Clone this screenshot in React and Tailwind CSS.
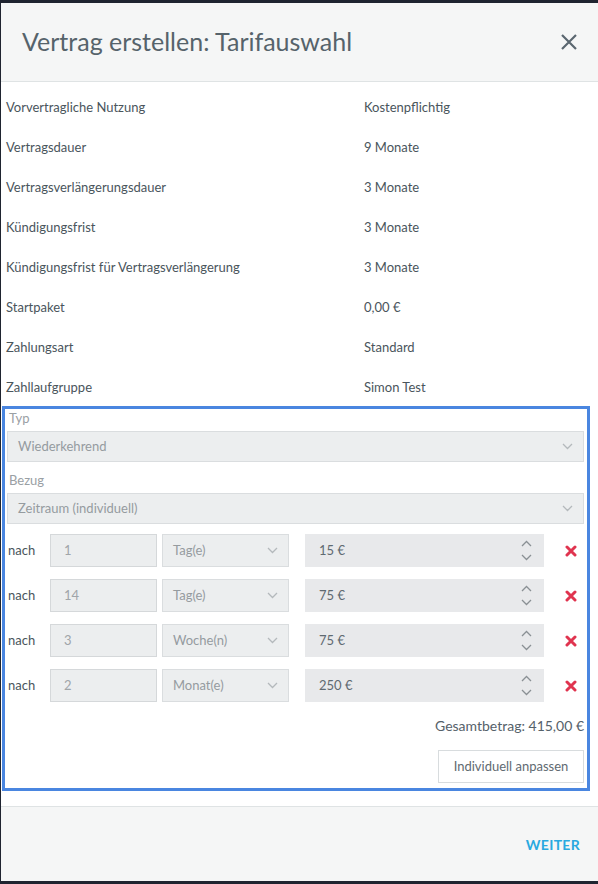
import React from 'react';

const details = [
    ['Vorvertragliche Nutzung', 'Kostenpflichtig'],
    ['Vertragsdauer', '9 Monate'],
    ['Vertragsverlängerungsdauer', '3 Monate'],
    ['Kündigungsfrist', '3 Monate'],
    ['Kündigungsfrist für Vertragsverlängerung', '3 Monate'],
    ['Startpaket', '0,00 €'],
    ['Zahlungsart', 'Standard'],
    ['Zahllaufgruppe', 'Simon Test'],
];

const steps = [
    { count: '1', unit: 'Tag(e)', price: '15 €' },
    { count: '14', unit: 'Tag(e)', price: '75 €' },
    { count: '3', unit: 'Woche(n)', price: '75 €' },
    { count: '2', unit: 'Monat(e)', price: '250 €' },
];

const Chevron = ({ up = false, className = '' }) => (
    <svg width="11" height="7" viewBox="0 0 11 7" className={className}>
        <path
            d={up ? 'M1 6 L5.5 1.5 L10 6' : 'M1 1 L5.5 5.5 L10 1'}
            fill="none"
            stroke="currentColor"
            strokeWidth="1.3"
        />
    </svg>
);

const SelectBox = ({ value, className = '' }) => (
    <div className={`flex items-center justify-between bg-[#eceeef] border border-[#dadddf] text-[#959b9f] ${className}`}>
        <span>{value}</span>
        <Chevron className="text-[#b4b9bc]" />
    </div>
);

export default function App() {
    return (
        <div className="h-[884px] bg-[#1f2430] pt-[3px] pb-[3px] pl-px font-['Lato',sans-serif]">
            <div className="h-full bg-white flex flex-col">
                {/* Header */}
                <div className="h-[79px] shrink-0 bg-[#f5f6f6] border-b border-[#dfe3e4] flex items-center justify-between pl-[21px] pr-[20px]">
                    <h1 className="text-[25px] text-[#56636b]">Vertrag erstellen: Tarifauswahl</h1>
                    <svg width="18" height="18" viewBox="0 0 18 18">
                        <path d="M2 2 L16 16 M16 2 L2 16" stroke="#5b6770" strokeWidth="2.2" />
                    </svg>
                </div>

                {/* Body */}
                <div className="flex-1 pt-[6px]">
                    {details.map(([label, value]) => (
                        <div key={label} className="h-10 flex items-center text-[13px] text-[#4a555c]">
                            <span className="w-[363px] pl-[5px]">{label}</span>
                            <span>{value}</span>
                        </div>
                    ))}

                    <div className="-mt-[2px] ml-px mr-[8px] border-[3px] border-[#4a86e0] pl-[2px] pr-[3px] pb-[5px] text-[13px]">
                        <div className="h-5 flex items-center pl-[2px] text-[#9aa0a4]">Typ</div>
                        <SelectBox value="Wiederkehrend" className="mt-[2px] h-[31px] pl-[10px] pr-[10px]" />
                        <div className="mt-[9px] h-5 flex items-center pl-[2px] text-[#9aa0a4]">Bezug</div>
                        <SelectBox value="Zeitraum (individuell)" className="mt-[2px] h-[31px] pl-[10px] pr-[10px]" />

                        <div className="mt-[10px] flex flex-col gap-[12px]">
                            {steps.map((s, i) => (
                                <div key={i} className="h-[33px] flex items-center">
                                    <span className="w-[43px] pl-[1px] text-[#4a555c]">nach</span>
                                    <div className="w-[107px] h-full flex items-center pl-[13px] bg-[#eceeef] border border-[#d5d8da] text-[#a0a5a9]">
                                        {s.count}
                                    </div>
                                    <SelectBox value={s.unit} className="ml-[5px] w-[127px] h-full pl-[10px] pr-[10px]" />
                                    <div className="ml-[16px] w-[239px] h-full flex items-center justify-between pl-[14px] pr-[12px] bg-[#e8e9eb] text-[#5f6a71]">
                                        <span>{s.price}</span>
                                        <div className="flex flex-col gap-[7px] text-[#8a9094]">
                                            <Chevron up />
                                            <Chevron />
                                        </div>
                                    </div>
                                    <div className="flex-1 flex justify-start pl-[21px]">
                                        <svg width="12" height="12" viewBox="0 0 12 12">
                                            <path d="M2 2 L10 10 M10 2 L2 10" stroke="#e0344f" strokeWidth="3" strokeLinecap="round" />
                                        </svg>
                                    </div>
                                </div>
                            ))}
                        </div>

                        <div className="mt-[13px] h-5 flex items-center justify-end text-[14px] text-[#55616a]">
                            Gesamtbetrag: 415,00 €
                        </div>
                        <div className="mt-[15px] flex justify-end">
                            <button className="w-[146px] h-[33px] border border-[#d8dcde] bg-white text-[13px] text-[#5f6a71]">
                                Individuell anpassen
                            </button>
                        </div>
                    </div>
                </div>

                {/* Footer */}
                <div className="h-[75px] shrink-0 bg-[#f5f6f6] border-t border-[#dfe3e4] flex items-center justify-end pr-[18px]">
                    <span className="text-[14px] font-bold text-[#29a9e0] tracking-[0.3px]">WEITER</span>
                </div>
            </div>
        </div>
    );
}
